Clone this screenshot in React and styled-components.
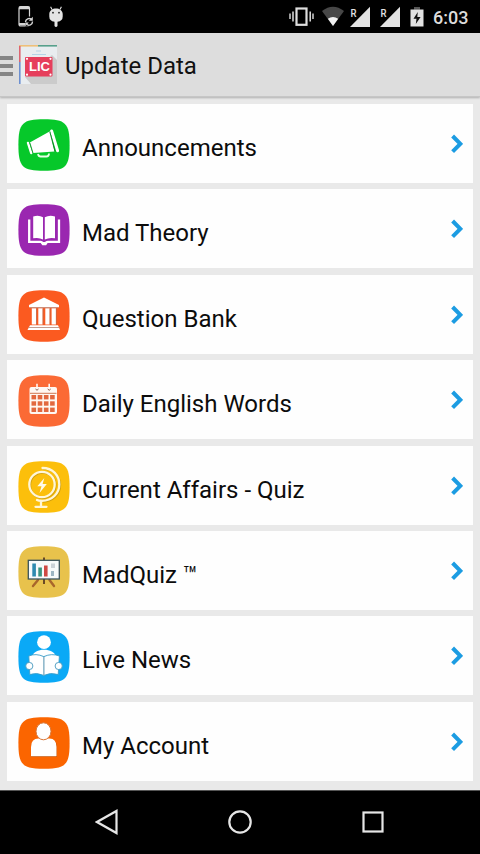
import React from 'react';
import styled, { createGlobalStyle } from 'styled-components';

const GlobalStyle = createGlobalStyle`
    * {
        box-sizing: border-box;
    }
    body {
        margin: 0;
        background: #000;
        font-family: Roboto, "Liberation Sans", sans-serif;
    }
    svg {
        display: block;
        flex: none;
    }
`;

const Screen = styled.div`
    width: 480px;
    height: 854px;
    display: flex;
    flex-direction: column;
    overflow: hidden;
    background: #e9e9e9;
`;

const StatusBar = styled.header`
    height: 33px;
    flex: none;
    display: flex;
    justify-content: space-between;
    padding: 0 10px 0 17px;
    background: #000;
`;

const StatusGroup = styled.div`
    display: flex;
    align-items: flex-start;
    padding-top: 5px;
`;

const StatusIcon = styled.svg`
    margin-right: ${props => props.$after || 0}px;
`;

const Clock = styled.span`
    width: 37px;
    padding-top: 2px;
    color: #dcdcdc;
    font-size: 18px;
    font-weight: 500;
    line-height: 22px;
    white-space: nowrap;
`;

const ActionBar = styled.div`
    height: 64px;
    flex: none;
    display: flex;
    align-items: center;
    background: #dddddd;
    border-bottom: 1px solid #c6c6c6;
    box-shadow: 0 1px 2px rgba(0, 0, 0, 0.25);
`;

const MenuBars = styled.div`
    width: 13px;
    margin-right: 6px;
    padding-top: 3px;
    display: flex;
    flex-direction: column;
    gap: 4px;
        span {
            height: 4px;
            background: #858585;
        }
`;

const Title = styled.h1`
    margin: 2px 0 0 8px;
    color: #111;
    font-size: 24px;
    font-weight: 400;
    line-height: 28px;
`;

const List = styled.ul`
    flex: 1;
    margin: 0;
    padding: 7px 7px 0;
    list-style: none;
    display: flex;
    flex-direction: column;
    gap: 6.4px;
`;

const Row = styled.li`
    height: 79px;
    flex: none;
    display: flex;
    align-items: flex-start;
    padding: 15px 10px 0 11px;
    background: #fefefe;
`;

const Label = styled.span`
    flex: 1;
    padding: 15px 0 0 12px;
    color: #0c0c0c;
    font-size: 24px;
    line-height: 28px;
    white-space: nowrap;
`;

const Arrow = styled.svg`
    margin-top: 15px;
`;

const NavBar = styled.nav`
    height: 64px;
    flex: none;
    display: flex;
    align-items: center;
    justify-content: center;
    gap: 109px;
    padding-bottom: 2px;
    background: #000;
    border-top: 1px solid #555;
`;

const Tile = ({ color, children }) => (
    <svg width="52" height="52" viewBox="0 0 52 52">
        <path
            d="M26 0.2C47.5 0.2 51.6 4 51.6 26S47.5 51.8 26 51.8 0.4 48 0.4 26 4.5 0.2 26 0.2z"
            fill={color}
        />
        {children}
    </svg>
);

const Megaphone = () => (
    <Tile color="#06c82a">
        <path d="M11.8 23.5L32 12.3l4.500 20.200L15 34z" fill="#fff" />
        <path d="M10 24l3.200 10" stroke="#fff" strokeWidth="2.400" strokeLinecap="round" />
        <path d="M33.600 12l6 19.800" stroke="#fff" strokeWidth="3" strokeLinecap="round" />
        <path d="M31.800 12.700l5.200 19.800" stroke="#087c20" strokeWidth="0.900" />
        <path d="M11.800 23.700l3.200 10.300" stroke="#078d20" strokeWidth="0.800" />
        <path d="M20 35q0.500 2.500 2.500 2.500h6q2.400 0 2.500-3" fill="none" stroke="#e8ffe8" strokeWidth="1.800" />
    </Tile>
);

const Book = () => (
    <Tile color="#9a27b0">
        <path d="M15.200 12.500q5.600-1.800 9.800 0.800v22.200q-4.200-2.400-9.800-1.200z" fill="#fff" />
        <path d="M37 12.500q-5.600-1.800-10.200 0.800v22.200q4.600-2.400 10.200-1.200z" fill="#fff" />
        <path d="M11.200 15.500v22.300h11.300q1.400 0 2 1.300h3.200q0.600-1.300 2-1.300h11.300V15.500" fill="none" stroke="#fff" strokeWidth="2.300" />
        <path d="M23 39h6.500l-1.400 2.300h-3.800z" fill="#fff" />
    </Tile>
);

const Bank = () => (
    <Tile color="#fb5a20">
        <path d="M26 7.500l15 7.500v2.300H11V15z" fill="#fff" />
        <path d="M13.800 18.300h4.400v16.200h-4.400zM20.300 18.300h4.400v16.200h-4.400zM27.300 18.300h4.400v16.200h-4.400zM33.600 18.300h4.400v16.200h-4.400z" fill="#fff" />
        <path d="M12 35.300h28l2 4.800H9.500z" fill="#fff" />
        <path d="M12 17.700h28M10.500 37.500h31" stroke="#bd9182" strokeWidth="0.900" />
        <path d="M18.500 18.500v16M25 18.500v16M32 18.500v16M38.300 18.500v16" stroke="#b86b50" strokeWidth="0.700" />
    </Tile>
);

const Calendar = () => (
    <Tile color="#fb6a35">
        <rect x="11.500" y="12" width="27.500" height="27" rx="2" fill="#fff8f3" />
        <path d="M19 8.700v4.800M31.200 8.700v4.800" stroke="#fff8f3" strokeWidth="1.600" />
        <path d="M17.500 14q1.500 2.500 3 0M29.700 14q1.500 2.500 3 0" fill="none" stroke="#8c5a48" strokeWidth="1" />
        <path d="M12 18.300h26.500" stroke="#d0764f" strokeWidth="1" />
        {[20, 26.3, 32.6].map(y =>
            [13.5, 19.7, 25.9, 32.1].map(x => (
                <rect key={`${x}-${y}`} x={x} y={y} width="4.600" height="4.400" fill="#e2683f" />
            ))
        )}
    </Tile>
);

const Globe = () => (
    <Tile color="#fcbf0b">
        <g fill="none" stroke="#9c7a12" strokeOpacity="0.45" strokeWidth="2.300" transform="translate(0.700 0.700)">
            <circle cx="24" cy="23.500" r="12.700" />
            <path d="M24.500 7C35 7 41.300 14.500 41.300 23.500S34 39.800 24 39.800" />
        </g>
        <g fill="none" stroke="#fff6d8" strokeWidth="2.300" strokeLinecap="round">
            <circle cx="24" cy="23.500" r="12.700" />
            <path d="M24.500 7C35 7 41.300 14.500 41.300 23.500S34 39.800 24 39.800q-3.500 0-5-0.800" />
            <path d="M23 40v5.500M17.500 45.800h11" />
        </g>
        <path d="M26.300 17l-7 8.300h4.200l-2 6.700 7.300-9h-4.200z" fill="#fffbe9" />
    </Tile>
);

const Board = () => (
    <Tile color="#e8c24c">
        <path d="M26 11.500v26.500" stroke="#6b4a25" strokeWidth="2" />
        <path d="M20 34l-5 6M31.500 34l4.500 6" stroke="#a8662b" strokeWidth="2.400" strokeLinecap="round" />
        <rect x="10.300" y="14.300" width="31" height="18.700" fill="#f7fbfb" stroke="#39545c" strokeWidth="1.300" />
        <rect x="14.300" y="17.500" width="3.600" height="13" fill="#2e8bb0" />
        <rect x="20.300" y="21.500" width="3.600" height="9" fill="#3b9580" />
        <rect x="26" y="19.500" width="3.600" height="11" fill="#cf4a44" />
        <rect x="33" y="17.500" width="4" height="4.500" fill="#cbd3d8" />
        <rect x="33" y="25" width="3" height="5" fill="#9db7c4" />
    </Tile>
);

const Reader = () => (
    <Tile color="#0aa9f6">
        <circle cx="26" cy="11.200" r="6.900" fill="#fff" />
        <path d="M14.500 25.500c0.500-9 22.500-9 23 0z" fill="#fff" />
        <path d="M10.800 25q7-3 15 0.600 8-3.600 15.600-0.600l-1.200 18.500q-8-2.400-14.400 0.900-7-3.300-14-0.900z" fill="#fff" stroke="#3a9dc8" strokeWidth="0.900" />
        <path d="M25.900 25.600v18.500" stroke="#4f8fad" strokeWidth="1" />
        <circle cx="11.300" cy="35" r="3.600" fill="#fff" stroke="#4699be" strokeWidth="0.900" />
        <circle cx="40.700" cy="35" r="3.600" fill="#fff" stroke="#4699be" strokeWidth="0.900" />
    </Tile>
);

const Person = () => (
    <Tile color="#fb6500">
        <path d="M13 40V30.500q0-8.500 7.500-8.500h11q7.500 0 7.500 8.500V40z" fill="#a44300" fillOpacity="0.6" />
        <path d="M13 39.200V30q0-8.500 7.500-8.500h11Q38.500 21.500 38.500 30v9.200z" fill="#fff" />
        <ellipse cx="25.500" cy="14.300" rx="7.500" ry="8.500" fill="#fff" stroke="#d97636" strokeWidth="1" />
    </Tile>
);

const AppLogo = () => (
    <svg width="38" height="39" viewBox="0 0 38 39">
        <rect width="38" height="39" fill="#e9edf0" />
        <path d="M33 10l5 5v24H12l-6-7z" fill="#cbcbcb" />
        <path d="M0 0.800h19" stroke="#efc079" strokeWidth="1.600" />
        <path d="M19 0.800h19" stroke="#57a08b" strokeWidth="1.600" />
        <path d="M0.800 1v16" stroke="#dd6470" strokeWidth="1.600" />
        <path d="M0.800 17v22" stroke="#6c8fd0" strokeWidth="1.600" />
        <path d="M17 6h5M13 9.500h14" stroke="#b5d3e6" strokeWidth="1.200" />
        <rect x="6" y="12" width="27.500" height="19.500" rx="1" fill="#e63f5c" />
        <g fill="#fff">
            <circle cx="8" cy="13.800" r="1.100" />
            <circle cx="31.500" cy="13.800" r="1.100" />
            <circle cx="8" cy="29.700" r="1.100" />
            <circle cx="31.500" cy="29.700" r="1.100" />
        </g>
        <text x="10" y="26" fill="#fff" fontSize="12.500" fontWeight="700" fontFamily="Liberation Sans, sans-serif" textLength="21" lengthAdjust="spacingAndGlyphs">LIC</text>
    </svg>
);

const PhoneSync = () => (
    <StatusIcon $after={14} width="17" height="23" viewBox="0 0 17 23">
        <rect x="2" y="1.700" width="10.500" height="19.300" rx="1.500" fill="none" stroke="#d6d6d6" strokeWidth="1.200" />
        <path d="M2 3h10.500M2 19.300h10.500" stroke="#d6d6d6" strokeWidth="2.500" />
        <rect x="8" y="11.500" width="9" height="10" fill="#000" />
        <path d="M8.500 17a3.600 3.600 0 0 1 6-2.600M15.500 16.500a3.600 3.600 0 0 1-6 2.800" fill="none" stroke="#d6d6d6" strokeWidth="1.400" />
        <path d="M15.800 11.800v4h-4zM8.200 21.600v-4h3.600z" fill="#d6d6d6" />
    </StatusIcon>
);

const Droid = () => (
    <StatusIcon width="16" height="23" viewBox="0 0 16 23">
        <path d="M4 4.500L2.600 1.800M12 4.500l1.400-2.700" stroke="#e4e4e4" strokeWidth="1.100" />
        <path d="M1.300 9C1.300 1.500 14.700 1.500 14.700 9v2.500q0 4.500-5.200 5.300V21q-1.500 2-3 0v-4.200Q1.300 16 1.300 11.500z" fill="#e4e4e4" />
        <circle cx="5" cy="7.700" r="0.900" fill="#222" />
        <circle cx="11" cy="7.700" r="0.900" fill="#222" />
    </StatusIcon>
);

const Vibrate = () => (
    <StatusIcon $after={8} width="25" height="23" viewBox="0 0 25 23">
        <rect x="7.500" y="3.500" width="10" height="16.300" fill="none" stroke="#dedede" strokeWidth="2.200" />
        <path d="M4 6.500v10M21.200 6.500v10" stroke="#dedede" strokeWidth="1.500" />
        <path d="M1 8.500v5.500M24 8.500v5.500" stroke="#dedede" strokeWidth="1.400" />
    </StatusIcon>
);

const Wifi = () => (
    <StatusIcon $after={6} width="22" height="23" viewBox="0 0 22 23">
        <path d="M0 6q11-8.500 22 0L11 21z" fill="#474747" />
        <path d="M5.800 13.800q5.200-3.600 10.400 0L11 21z" fill="#f1f1f1" />
    </StatusIcon>
);

const Signal = () => (
    <StatusIcon $after={10} width="20" height="23" viewBox="0 0 20 23">
        <path d="M20 1.700V22H0z" fill="#e2e2e2" />
        <text x="0.500" y="11.500" fill="#e2e2e2" fontSize="11" fontWeight="500" textLength="6" lengthAdjust="spacingAndGlyphs">R</text>
    </StatusIcon>
);

const Battery = () => (
    <StatusIcon $after={9} width="14" height="23" viewBox="0 0 14 23">
        <path d="M4 2h6v2.700H4z" fill="#555" />
        <path d="M0.500 4.500h13V21.500H0.500z" fill="#e2e2e2" />
        <path d="M7.800 7L3.500 13.700h3L5.800 19l4.800-7H7.300z" fill="#111" />
    </StatusIcon>
);

const items = [
    { label: 'Announcements', Icon: Megaphone },
    { label: 'Mad Theory', Icon: Book },
    { label: 'Question Bank', Icon: Bank },
    { label: 'Daily English Words', Icon: Calendar },
    { label: 'Current Affairs - Quiz', Icon: Globe },
    { label: 'MadQuiz ™', Icon: Board },
    { label: 'Live News', Icon: Reader },
    { label: 'My Account', Icon: Person },
];

const App = () => (
    <Screen>
        <GlobalStyle />
        <StatusBar>
            <StatusGroup>
                <PhoneSync />
                <Droid />
            </StatusGroup>
            <StatusGroup>
                <Vibrate />
                <Wifi />
                <Signal />
                <Signal />
                <Battery />
                <Clock>6:03</Clock>
            </StatusGroup>
        </StatusBar>
        <ActionBar>
            <MenuBars>
                <span />
                <span />
                <span />
            </MenuBars>
            <AppLogo />
            <Title>Update Data</Title>
        </ActionBar>
        <List>
            {items.map(({ label, Icon }) => (
                <Row key={label}>
                    <Icon />
                    <Label>{label}</Label>
                    <Arrow width="12" height="20" viewBox="0 0 12 20">
                        <path d="M1.600 2L9.300 9.800l-7.700 7.800" fill="none" stroke="#1c9ce2" strokeWidth="4" />
                    </Arrow>
                </Row>
            ))}
        </List>
        <NavBar>
            <svg width="24" height="26" viewBox="0 0 24 26">
                <path d="M21.500 2v22L2 13z" fill="none" stroke="#e6e6e6" strokeWidth="2.200" />
            </svg>
            <svg width="24" height="26" viewBox="0 0 24 26">
                <circle cx="12" cy="13" r="10.700" fill="none" stroke="#e6e6e6" strokeWidth="2.200" />
            </svg>
            <svg width="24" height="26" viewBox="0 0 24 26">
                <rect x="2.500" y="3.500" width="19" height="19" fill="none" stroke="#e6e6e6" strokeWidth="2.200" />
            </svg>
        </NavBar>
    </Screen>
);

export default App;
